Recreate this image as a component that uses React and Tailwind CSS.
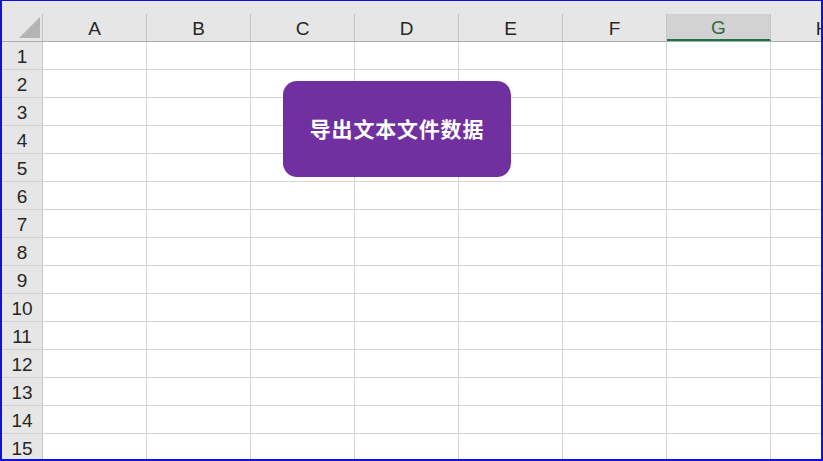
const COLS = ['A', 'B', 'C', 'D', 'E', 'F', 'G', 'H'];
const ROWS = Array.from({ length: 15 }, (_, i) => i + 1);

function ColHeader({ label }) {
  const selected = label === 'G';
  return (
    <div
      className={
        'w-[104px] shrink-0 h-full flex items-center justify-center border-r border-[#c6c6c6] ' +
        (selected
          ? 'bg-[#d2d2d2] text-[#2d6a44] border-b-2 border-b-[#217346]'
          : 'text-[#262626]')
      }
    >
      <span className="text-[19px] leading-none pt-[2px]">{label}</span>
    </div>
  );
}

export default function App() {
  return (
    <div
      className="relative w-[823px] h-[461px] overflow-hidden bg-white border-t border-l-2 border-r-2 border-b-2 border-[#1010e0]"
      style={{ fontFamily: '"Liberation Sans", Arial, sans-serif' }}
    >
      {/* strip above headers */}
      <div className="h-[13px] bg-[#e6e6e6]" />

      {/* column headers */}
      <div className="flex h-[28px] bg-[#e6e6e6] border-b border-[#ababab]">
        <div className="relative w-[41px] shrink-0 h-full border-r border-[#c6c6c6]">
          <svg className="absolute left-0 top-0" width="41" height="28" viewBox="0 0 41 28">
            <polygon points="38,3 38,24 17,24" fill="#b4b4b4" />
          </svg>
        </div>
        {COLS.map(c => (
          <ColHeader key={c} label={c} />
        ))}
      </div>

      {/* rows */}
      {ROWS.map(r => (
        <div key={r} className="flex h-[28px] border-b border-[#d4d4d4]">
          <div className="w-[41px] shrink-0 h-full bg-[#e6e6e6] border-r border-[#c6c6c6] flex items-center justify-center text-[#262626]">
            <span className="text-[19px] leading-none pt-[2px]">{r}</span>
          </div>
          {COLS.map(c => (
            <div key={c} className="w-[104px] shrink-0 h-full border-r border-[#d4d4d4]" />
          ))}
        </div>
      ))}

      {/* shape button over the sheet */}
      <div className="absolute left-[281px] top-[80px] w-[228px] h-[96px] rounded-[14px] bg-[#7030a0] flex items-center justify-center">
        <span
          className="text-white font-bold text-[21px] tracking-[0.8px]"
          style={{ fontFamily: '"Noto Sans CJK SC", "Noto Sans", sans-serif' }}
        >
          导出文本文件数据
        </span>
      </div>
    </div>
  );
}
